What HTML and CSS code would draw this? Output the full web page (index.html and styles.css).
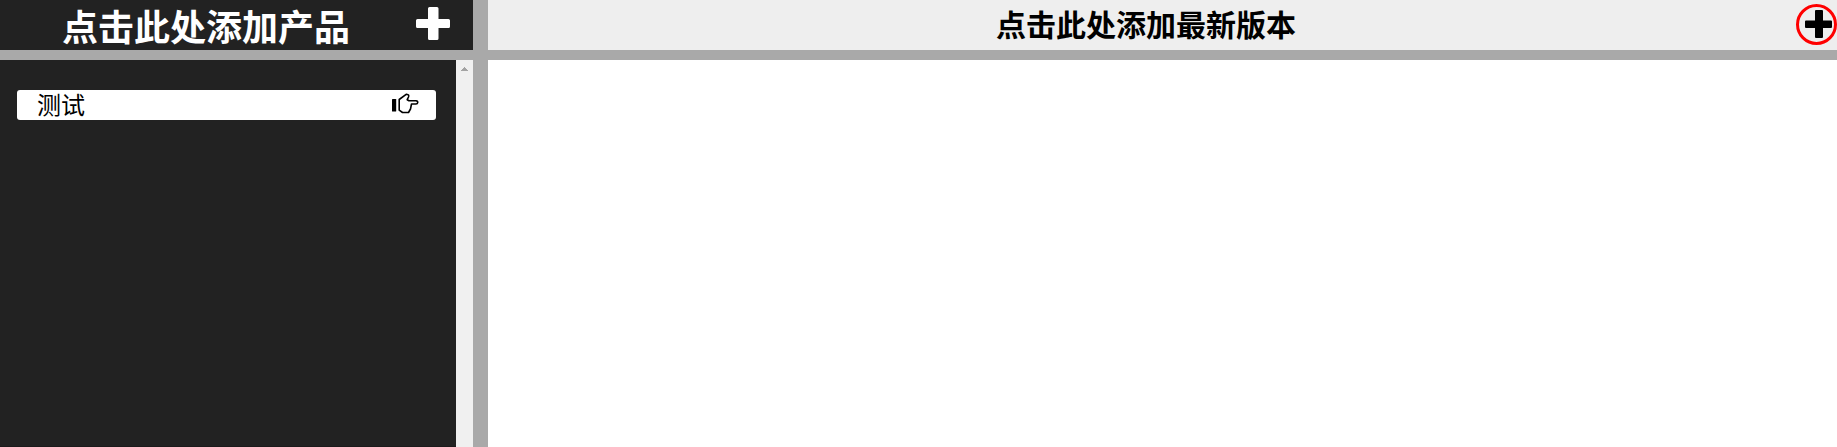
FILE: index.html
```html
<!DOCTYPE html>
<html lang="zh-CN">
<head>
<meta charset="utf-8">
<title>产品版本</title>
<link rel="stylesheet" href="styles.css">
</head>
<body>
<div class="app">
  <header class="product-head">
    <h1 class="product-title">点击此处添加产品</h1>
    <svg class="product-plus" viewBox="0 0 34 33"><path d="M13.500 0h7.500q1.500 0 1.500 1.500V12h10q1.500 0 1.500 1.500v6q0 1.500-1.500 1.500h-10v10.500q0 1.500-1.500 1.500h-7.500q-1.500 0-1.500-1.500V21H1.500Q0 21 0 19.500v-6Q0 12 1.500 12H12V1.500Q12 0 13.500 0z"/></svg>
  </header>
  <header class="version-head">
    <h2 class="version-title">点击此处添加最新版本</h2>
    <span class="version-add"><svg viewBox="0 0 27 28"><path d="M11 0h6q1 0 1 1v9.500h8q1 0 1 1v5.500q0 1-1 1h-8v9q0 1-1 1h-6q-1 0-1-1v-9H1q-1 0-1-1v-5.500q0-1 1-1h9V1q0-1 1-1z"/></svg></span>
  </header>
  <aside class="product-panel">
    <div class="product-list">
      <div class="product-item">
        <span class="product-name">测试</span>
        <svg class="hand" viewBox="0 0 27 21"><rect x="0" y="6" width="4.200" height="12.500" rx=".6"/><path class="outline" d="M7.200 6.500L14.500 1.200Q17.500 1.500 16.500 4L15.200 6.700L17 7.800H24Q26 8 25.700 9.700Q25.500 11 24 11H19.500L18.500 16L16.500 19.500H10.500L7.200 17.200Z"/></svg>
      </div>
    </div>
    <div class="scrollbar"><svg viewBox="0 0 7 4"><path d="M3 0h1v1h1v1h1v1h1v1H0V3h1V2h1V1h1z"/></svg></div>
  </aside>
  <main class="version-panel"></main>
</div>
</body>
</html>
```
FILE: styles.css
```css
* { box-sizing: border-box; }
body { margin: 0; font-family: "Noto Sans CJK SC", sans-serif; }
svg { display: block; }
.app {
  display: grid;
  grid-template: 50px 1fr / 473px 1fr;
  gap: 10px 15px;
  height: 100vh;
  background: #a9a9a9;
  overflow: hidden;
}
.product-head {
  display: flex;
  justify-content: space-between;
  align-items: flex-start;
  padding: 0 23px 0 62px;
  background: #222;
  color: #fff;
}
.product-title { margin: 0; font-size: 36px; line-height: 51px; font-weight: 700; }
.product-plus { width: 34px; height: 33px; margin-top: 7px; fill: #fff; }
.version-head {
  display: flex;
  justify-content: flex-end;
  align-items: flex-start;
  background: #eee;
}
.version-title {
  flex: 1;
  margin: 0 -41px 0 0;
  padding-right: 33px;
  font-size: 30px;
  line-height: 46px;
  font-weight: 700;
  text-align: center;
}
.version-add {
  width: 41px;
  height: 41px;
  margin-top: 4px;
  padding: 3px 0 0 6px;
  border: 3px solid red;
  border-radius: 50%;
}
.version-add svg { width: 27px; height: 28px; }
.product-panel { display: flex; background: #222; }
.product-list { flex: 1; padding: 30px 20px 0 17px; border-bottom: 1px solid #1c1a1b; }
.product-item {
  display: flex;
  justify-content: space-between;
  height: 30px;
  padding: 0 17px 0 20px;
  border-radius: 3px;
  background: #fff;
  font-size: 24px;
}
.product-name { line-height: 28px; }
.hand { width: 27px; height: 21px; margin-top: 3px; }
.outline { fill: none; stroke: #000; stroke-width: 1.6; stroke-linejoin: round; }
.scrollbar { width: 17px; padding: 7px 5px; background: #f0f0f0; }
.scrollbar svg { width: 7px; height: 4px; fill: #a3a3a3; }
.version-panel { background: #fff; }
```
